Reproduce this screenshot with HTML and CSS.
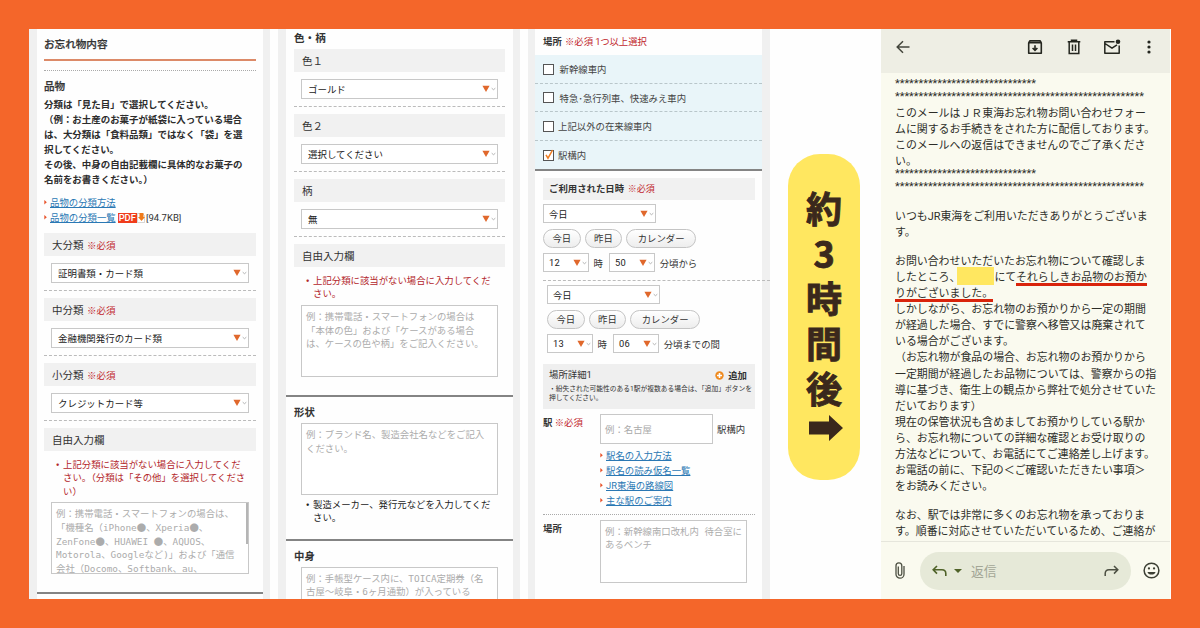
FILE: index.html
```html
<!DOCTYPE html>
<html lang="ja">
<head>
<meta charset="utf-8">
<title>お忘れ物お問い合わせ</title>
<link rel="stylesheet" href="styles.css">
</head>
<body>
<svg width="0" height="0" class="defs"><defs>
<symbol id="dd" viewBox="0 0 14 8"><path d="M.4 .8h7.2L4 7z" fill="#e0682c"/><path d="M9.7 3.2l1.8 1.5 1.8-1.5" fill="none" stroke="#aaa" stroke-width=".9"/></symbol>
<symbol id="tick" viewBox="0 0 3 5"><path d="M.3 0l2.5 2.3L.3 4.6z" fill="#e8542c"/></symbol>
</defs></svg>
<main class="frame">

<section class="panel">
  <div class="inner">
    <h2 class="title">お忘れ物内容</h2>
    <div class="rule rule-top"></div>
    <h3 class="goods">品物</h3>
    <p class="desc">分類は「見た目」で選択してください。<br>（例：お土産のお菓子が紙袋に入っている場合<br>は、大分類は「食料品類」ではなく「袋」を選<br>択してください。<br>その後、中身の自由記載欄に具体的なお菓子の<br>名前をお書きください｡）</p>
    <ul class="links">
      <li><svg class="tick"><use href="#tick"/></svg><a>品物の分類方法</a></li>
      <li><svg class="tick"><use href="#tick"/></svg><a>品物の分類一覧</a><span class="pdf">PDF</span><svg class="dl" viewBox="0 0 8 10"><path d="M.5 .5h5l2 2v7h-7z" fill="#fff" stroke="#bbb" stroke-width=".6"/><path d="M2.5 0h4v4h1.5L4.500 8 1 4h1.500z" fill="#ef7a1a"/></svg><span class="size">[94.7KB]</span></li>
    </ul>
    <div class="group"><div class="bar">大分類 <em>※必須</em></div><div class="select">証明書類・カード類<svg class="dd"><use href="#dd"/></svg></div></div>
    <div class="group"><div class="bar">中分類 <em>※必須</em></div><div class="select">金融機関発行のカード類<svg class="dd"><use href="#dd"/></svg></div></div>
    <div class="group"><div class="bar">小分類 <em>※必須</em></div><div class="select">クレジットカード等<svg class="dd"><use href="#dd"/></svg></div></div>
    <div class="bar">自由入力欄</div>
    <div class="note red"><b>・</b><p>上記分類に該当がない場合に入力してくだ<br>さい。（分類は「その他」を選択してくださ<br>い）</p></div>
    <div class="area scroll"><p>例：携帯電話・スマートフォンの場合は、<br>「機種名（iPhone<i>●</i>、Xperia<i>●</i>、<br>ZenFone<i>●</i>、HUAWEI <i>●</i>、AQUOS、<br>Motorola、Googleなど)」および「通信<br>会社（Docomo、Softbank、au、</p><span class="thumb"></span></div>
  </div>
  <div class="divider end"></div>
</section>

<section class="panel">
  <div class="inner">
    <h3 class="color-head">色・柄</h3>
    <div class="group"><div class="bar">色１</div><div class="select">ゴールド<svg class="dd"><use href="#dd"/></svg></div></div>
    <div class="group"><div class="bar">色２</div><div class="select">選択してください<svg class="dd"><use href="#dd"/></svg></div></div>
    <div class="group"><div class="bar">柄</div><div class="select">無<svg class="dd"><use href="#dd"/></svg></div></div>
    <div class="bar">自由入力欄</div>
    <div class="note red"><b>・</b><p>上記分類に該当がない場合に入力してくだ<br>さい。</p></div>
    <div class="area"><p>例：携帯電話・スマートフォンの場合は<br>「本体の色」および「ケースがある場合<br>は、ケースの色や柄」をご記入ください。</p></div>
  </div>
  <div class="divider d-shape"></div>
  <div class="inner">
    <h3 class="sub-head">形状</h3>
    <div class="area flush"><p>例：ブランド名、製造会社名などをご記入<br>ください。</p></div>
    <div class="note dark"><b>・</b><p>製造メーカー、発行元などを入力してくだ<br>さい。</p></div>
  </div>
  <div class="divider d-content"></div>
  <div class="inner">
    <h3 class="sub-head">中身</h3>
    <div class="area flush"><p>例：手帳型ケース内に、TOICA定期券（名<br>古屋〜岐阜・6ヶ月通勤）が入っている</p></div>
  </div>
</section>

<section class="panel">
  <div class="place-head"><strong>場所</strong> <em>※必須 1つ以上選択</em></div>
  <div class="checks">
    <label class="wide"><span class="box"></span>新幹線車内</label>
    <label class="wide"><span class="box"></span>特急･急行列車、快速みえ車内</label>
    <label><span class="box"></span>上記以外の在来線車内</label>
    <label><span class="box"><svg viewBox="0 0 10 10"><path d="M2 4.800l2 3.400L8.600 0" fill="none" stroke="#ee7d22" stroke-width="1.500"/></svg></span>駅構内</label>
  </div>
  <div class="divider"></div>
  <div class="inner">
    <div class="date-bar"><strong>ご利用された日時</strong> <em>※必須</em></div>
    <div class="when">
      <div class="select day">今日<svg class="dd"><use href="#dd"/></svg></div>
      <div class="btns"><span>今日</span><span>昨日</span><span class="cal">カレンダー</span></div>
      <div class="time"><div class="select num">12<svg class="dd"><use href="#dd"/></svg></div><span class="ji">時</span><div class="select num">50<svg class="dd"><use href="#dd"/></svg></div><span>分頃から</span></div>
    </div>
    <div class="until"></div>
    <div class="when second">
      <div class="select day">今日<svg class="dd"><use href="#dd"/></svg></div>
      <div class="btns"><span>今日</span><span>昨日</span><span class="cal">カレンダー</span></div>
      <div class="time"><div class="select num">13<svg class="dd"><use href="#dd"/></svg></div><span class="ji">時</span><div class="select num">06<svg class="dd"><use href="#dd"/></svg></div><span>分頃までの間</span></div>
    </div>
    <div class="detail">
      <div class="detail-top"><span>場所詳細1</span><span class="add"><svg viewBox="0 0 9 9"><circle cx="4.500" cy="4.500" r="4.200" fill="#ef8a1e"/><path d="M4.500 2v5M2 4.500h5" stroke="#fff" stroke-width="1.600"/></svg>追加</span></div>
      <p>・紛失された可能性のある1駅が複数ある場合は、「追加」ボタンを<br>押してください。</p>
    </div>
    <div class="field station">
      <div class="label"><strong>駅</strong> <em>※必須</em></div>
      <div>
        <div class="input-row"><div class="input">例：名古屋</div><span>駅構内</span></div>
        <ul class="links">
          <li><svg class="tick"><use href="#tick"/></svg><a>駅名の入力方法</a></li>
          <li><svg class="tick"><use href="#tick"/></svg><a>駅名の読み仮名一覧</a></li>
          <li><svg class="tick"><use href="#tick"/></svg><a>JR東海の路線図</a></li>
          <li><svg class="tick"><use href="#tick"/></svg><a>主な駅のご案内</a></li>
        </ul>
      </div>
    </div>
    <div class="field spot">
      <div class="label"><strong>場所</strong></div>
      <div class="area small"><p>例：新幹線南口改札内&ensp;待合室に<br>あるベンチ</p></div>
    </div>
  </div>
</section>

<div class="middle">
  <div class="pill"><span>約</span><span>3</span><span>時</span><span>間</span><span>後</span>
    <svg viewBox="0 0 34 26"><path d="M0 6.500h20V0l14 13-14 13v-6.500H0z" fill="#3a281c"/></svg>
  </div>
</div>

<section class="mail">
  <header>
    <svg class="back" viewBox="0 0 14 14"><path d="M13.500 7H1.200M7 1.200L1.200 7 7 12.800" fill="none" stroke="#44463c" stroke-width="1.500"/></svg>
    <svg class="ic archive" viewBox="0 0 16 16"><path d="M1.700 4.200L3 1.700h10l1.300 2.500v10.100H1.700z" fill="none" stroke="#24261f" stroke-width="1.600" stroke-linejoin="round"/><path d="M1.700 2.500h12.600v2H1.700z" fill="#24261f"/><path d="M8 6.300v5M5.600 9L8 11.400 10.400 9" fill="none" stroke="#24261f" stroke-width="1.600"/></svg>
    <svg class="ic trash" viewBox="0 0 16 16"><path d="M1.700 2.700h12.600M5.500 2.500V1.200h5v1.300M3.200 3v11.400h9.600V3M6.500 5.500v6.500M9.500 5.500v6.500" fill="none" stroke="#24261f" stroke-width="1.500"/></svg>
    <svg class="ic unread" viewBox="0 0 18 16"><path d="M11.500 2.700H1.800v11.500h14.400V6.500M2 4.500l7 4.700 5-3.300" fill="none" stroke="#24261f" stroke-width="1.500" stroke-linejoin="round"/><circle cx="15" cy="2.700" r="2.300" fill="#24261f"/></svg>
    <svg class="dots" viewBox="0 0 4 14"><g fill="#24261f"><circle cx="2" cy="2" r="1.600"/><circle cx="2" cy="7" r="1.600"/><circle cx="2" cy="12" r="1.600"/></g></svg>
  </header>
  <article>
    <p class="stars">******************************<br>*****************************************************</p>
    <p class="intro">このメールはＪＲ東海お忘れ物お問い合わせフォー<br>ムに関するお手続きをされた方に配信しております。<br>このメールへの返信はできませんのでご了承くださ<br>い。</p>
    <p class="stars again">******************************<br>*****************************************************</p>
    <p class="thanks">いつもJR東海をご利用いただきありがとうございま<br>す。</p>
    <p class="report">お問い合わせいただいたお忘れ物について確認しま<br>したところ、<span class="mask"></span>にて<span class="mark">それらしきお品物のお預か</span><br><span class="mark tail">りがございました。</span><br>しかしながら、お忘れ物のお預かりから一定の期間<br>が経過した場合、すでに警察へ移管又は廃棄されて<br>いる場合がございます。<br>（お忘れ物が食品の場合、お忘れ物のお預かりから<br>一定期間が経過したお品物については、警察からの指<br>導に基づき、衛生上の観点から弊社で処分させていた<br>だいております）<br>現在の保管状況も含めましてお預かりしている駅か<br>ら、お忘れ物についての詳細な確認とお受け取りの<br>方法などについて、お電話にてご連絡差し上げます。<br>お電話の前に、下記の＜ご確認いただきたい事項＞<br>をお読みください。</p>
    <p class="closing">なお、駅では非常に多くのお忘れ物を承っておりま<br>す。順番に対応させていただいているため、ご連絡が</p>
  </article>
  <footer>
    <svg class="clip" viewBox="0 0 10 17"><path d="M9 4v8.200a4 4 0 0 1-8 0V3.800a2.900 2.900 0 0 1 5.800 0v7.900a1.750 1.750 0 0 1-3.500 0V4.500" fill="none" stroke="#4c4f42" stroke-width="1.300"/></svg>
    <div class="reply">
      <svg class="arrow" viewBox="0 0 15 12"><path d="M5 1L1.200 4.800 5 8.600M1.400 4.800H10q3.800 0 3.800 3.700V11" fill="none" stroke="#4f6228" stroke-width="1.600"/></svg>
      <svg class="caret" viewBox="0 0 8 4"><path d="M0 0h8L4 4z" fill="#4f6228"/></svg>
      <span>返信</span>
      <svg class="arrow fwd" viewBox="0 0 15 12"><path d="M10 1l3.800 3.800L10 8.600M13.600 4.800H5Q1.200 4.800 1.200 8.500V11" fill="none" stroke="#4c4f42" stroke-width="1.500"/></svg>
    </div>
    <svg class="smile" viewBox="0 0 18 18"><circle cx="9" cy="9" r="7.800" fill="none" stroke="#3c3f34" stroke-width="1.600"/><circle cx="6.300" cy="6.800" r="1.200" fill="#3c3f34"/><circle cx="11.700" cy="6.800" r="1.200" fill="#3c3f34"/><path d="M4.700 10.500h8.600a4.500 4 0 0 1-8.600 0z" fill="#3c3f34"/></svg>
  </footer>
</section>
</main>
</body>
</html>
```

FILE: styles.css
```css
* { box-sizing: border-box; }
body, h2, h3, p, ul { margin: 0; padding: 0; }
body {
  width: 1200px;
  height: 628px;
  padding: 29px;
  overflow: hidden;
  background: #f4662a;
  font-family: Roboto, "Noto Sans CJK JP", sans-serif;
  font-size: 9.4px;
  color: #333;
  white-space: nowrap;
}
.defs { position: absolute; }
em, i { font-style: normal; }
em { color: #c1272d; }
ul { list-style: none; }
svg { display: block; flex: none; }

.frame {
  display: flex;
  width: 1142px;
  height: 570px;
  overflow: hidden;
  background: #fefefe;
}

/* form panels */
.panel {
  flex: none;
  width: 242px;
  height: 570px;
  margin-right: 8px;
  border: solid #f0f0f0;
  border-width: 0 7px 0 8px;
  background: #fefefe;
}
.panel:first-child { width: 241px; }
.inner { padding: 0 8px; }
.panel:first-child .inner { padding: 0 7px; }
.title {
  height: 32px;
  padding-top: 1px;
  border-bottom: 2px solid #dc8a68;
  font-size: 10.6px;
  font-weight: 500;
  line-height: 30px;
  -webkit-text-stroke: .25px #333;
}
.rule { border-bottom: 1px dotted #aaa; }
.rule-top { height: 10px; }
.goods {
  margin-top: 5px;
  font-size: 10.6px;
  font-weight: 500;
  line-height: 21px;
  -webkit-text-stroke: .25px #333;
}
.desc {
  font-size: 9.46px;
  font-weight: 700;
  line-height: 15px;
  color: #2c2c2c;
}
.links { margin-top: 8px; line-height: 15px; }
.links li { display: flex; align-items: center; height: 15px; }
.links a { color: #2a78b4; text-decoration: underline; text-underline-offset: 1px; }
.tick { width: 3px; height: 5px; margin-right: 3px; }
.pdf {
  margin-left: 2px;
  padding: 0 1px;
  background: #f03c1c;
  color: #fff;
  font-size: 9.4px;
  font-weight: 500;
  line-height: 10px;
}
.dl { width: 8px; height: 10px; }
.size { margin-left: 1px; font-size: 9.5px; }

.group {
  height: 58px;
  margin-bottom: 7px;
  border-bottom: 1px dashed #bbb;
}
.links + .group { margin-top: 8px; }
.bar {
  height: 23px;
  padding: .5px 0 0 8px;
  background: #f1f1f1;
  font-size: 10.5px;
  line-height: 23px;
}
.bar em { margin-left: 1px; font-size: 9.5px; }
.select {
  display: flex;
  align-items: center;
  justify-content: space-between;
  height: 20px;
  padding: 0 1px 0 6px;
  border: 1px solid #c8c8c8;
  background: #fff;
  font-size: 9.45px;
  color: #222;
}
.group .select { width: 197px; margin: 7px 0 0 7px; }
.panel:first-child .select { width: 198px; }
.dd { width: 14px; height: 8px; }

.note {
  display: flex;
  margin: 7px 0 0 9px;
  line-height: 13.4px;
}
.note b { width: 10px; font-weight: 700; }
.red { color: #b3262b; }
.area {
  position: relative;
  width: 197px;
  height: 72px;
  margin: 4px 0 0 7px;
  padding: 4px 0 0 4px;
  overflow: hidden;
  border: 1px solid #c8c8c8;
  background: #fff;
  font-family: "DejaVu Sans Mono", "Noto Sans CJK JP", monospace;
  font-size: 9.4px;
  line-height: 13.75px;
  color: #acacac;
}
.area.scroll { width: 198px; }
.area i { font-family: "Noto Sans CJK JP", sans-serif; }
.thumb {
  position: absolute;
  top: 0;
  right: 0;
  width: 2px;
  height: 41px;
  background: #b5b5b5;
}
.divider { height: 2px; background: #848484; }
.end { margin-top: 18px; }

.color-head {
  height: 20px;
  padding-top: 1px;
  font-size: 10.6px;
  line-height: 18px;
}
.d-shape { margin-top: 18px; }
.sub-head {
  height: 26px;
  padding-top: 1px;
  font-size: 10.4px;
  line-height: 30px;
}
.area.flush { margin-top: 0; }
.dark { margin-top: 3px; color: #222; }
.d-content { margin-top: 14px; }

/* place and date */
.place-head {
  height: 26px;
  padding-left: 8px;
  line-height: 25px;
}
.place-head em { margin-left: 1px; letter-spacing: -.1px; }
.checks { background: #e9f5f9; }
.checks label {
  display: flex;
  align-items: center;
  gap: 4px;
  height: 28.5px;
  padding: 1px 0 0 8px;
  border-bottom: 1px dashed #b9c6ca;
  color: #444;
}
.checks .wide { gap: 5.500px; }
.checks label:last-child { border: 0; }
.box { width: 11px; height: 11px; border: 1px solid #555; background: #fff; }
.box svg { width: 10px; height: 10px; margin-top: -1px; overflow: visible; }
.panel:nth-child(3) { margin-right: 0; border-left-width: 7px; border-right-width: 8px; }
.panel:nth-child(3) .inner { padding: 0 7px 0 8px; }
.date-bar {
  height: 22px;
  margin-top: 7px;
  padding-left: 6px;
  background: #f1f1f1;
  line-height: 22px;
}
.date-bar em { margin-left: 1.500px; font-size: 9px; }
.when { padding-top: 4px; }
.when .select { height: 19px; font-size: 9.3px; padding-left: 5px; }
.day { width: 113px; }
.btns { display: flex; gap: 4px; margin-top: 5.500px; }
.btns span {
  width: 37.600px;
  height: 19px;
  border: 1px solid #c4c4c4;
  border-radius: 10px;
  background: linear-gradient(#fff, #ededed);
  line-height: 17px;
  text-align: center;
}
.btns .cal { width: 70px; }
.time { display: flex; align-items: center; margin-top: 5.500px; }
.num { width: 45.600px; margin-right: 5px; letter-spacing: .3px; }
.ji { width: 15.500px; }
.until { width: 227px; height: 9px; border-bottom: 1px dashed #bbb; }
.second { padding-left: 4px; }
.detail {
  height: 45px;
  margin-top: 10.500px;
  padding: 3px 8px 0 6px;
  background: #efefef;
}
.detail-top { display: flex; justify-content: space-between; height: 18px; line-height: 16px; }
.add { display: flex; align-items: center; gap: 4px; font-weight: 700; }
.add svg { width: 9px; height: 9px; }
.detail p { font-size: 6.75px; line-height: 9.6px; }

.field { display: grid; grid-template-columns: 57px 1fr; }
.station { height: 106px; padding-top: 5px; border-bottom: 1px dotted #aaa; }
.label { line-height: 17px; }
.input-row { display: flex; align-items: center; gap: 4px; }
.input {
  width: 113px;
  height: 30px;
  padding-left: 4px;
  border: 1px solid #c8c8c8;
  background: #fff;
  color: #aaa;
  line-height: 29px;
}
.station .links { margin-top: 4px; }
.station .links li { height: 15.100px; }
.spot .label { line-height: 27px; }
.area.small { width: 147px; height: 63px; margin: 5px 0 0; }

/* elapsed time badge */
.middle { flex: none; width: 111px; padding: 125px 0 0 18px; }
.pill {
  display: flex;
  flex-direction: column;
  align-items: center;
  width: 72px;
  height: 326px;
  padding-top: 31px;
  border-radius: 32px;
  background: #ffe760;
  color: #3a281c;
  font: 700 36px/45px "Noto Sans CJK JP", sans-serif;
  -webkit-text-stroke: .9px #3a281c;
  stroke-linejoin: round;
}
.pill span { height: 45px; }
.pill svg { width: 34px; height: 26px; margin: 5px 0 0 4px; }

/* mail app */
.mail {
  display: flex;
  flex-direction: column;
  width: 290px;
  border-right: 1px solid #fefefe;
  background: #fafaef;
  color: #2c2d28;
}
.mail header {
  display: flex;
  align-items: center;
  flex: none;
  height: 44px;
  padding: 0 0 8px 15px;
  background: #eeeee4;
}
.back { width: 14px; height: 14px; margin-right: 117px; }
.ic { width: 16px; height: 16px; margin-right: 22.500px; }
.ic.trash { margin-right: 21.500px; }
.ic.unread { width: 18px; margin-right: 26px; }
.dots { width: 4px; height: 14px; }
article {
  flex: none;
  height: 468px;
  padding: 5px 0 0 14px;
  font-size: 10.92px;
  line-height: 16.080px;
}
.stars { height: 29px; margin-top: -1px; line-height: 13px; }
.stars.again { height: 29.500px; margin-top: -3.500px; }
.thanks { margin-top: 13px; }
.report { margin-top: 12.500px; }
.closing { margin-top: 12.500px; }
.mask {
  display: inline-block;
  width: 37px;
  height: 18px;
  margin: -6px 0 -4px -3px;
  vertical-align: 0;
  background: #ffe760;
}
.mark {
  padding-bottom: 2px;
  background: linear-gradient(#d9240c, #d9240c) left bottom / 100% 3.500px no-repeat;
}
footer {
  display: flex;
  align-items: center;
  flex: none;
  height: 58px;
  padding: 0 0 0 14px;
  border-top: 1px solid #e6e6dc;
}
.clip { width: 10px; height: 17px; }
.reply {
  display: flex;
  align-items: center;
  width: 211px;
  height: 38px;
  margin: 0 11.500px 0 15px;
  padding: 0 12px;
  border-radius: 19px;
  background: #e6e9d8;
  color: #a3a696;
  font-size: 12.800px;
}
.arrow { width: 15px; height: 12px; }
.caret { width: 8px; height: 4px; margin: 0 9px 0 7px; }
.fwd { margin-left: auto; }
.smile { width: 17px; height: 17px; }
```
